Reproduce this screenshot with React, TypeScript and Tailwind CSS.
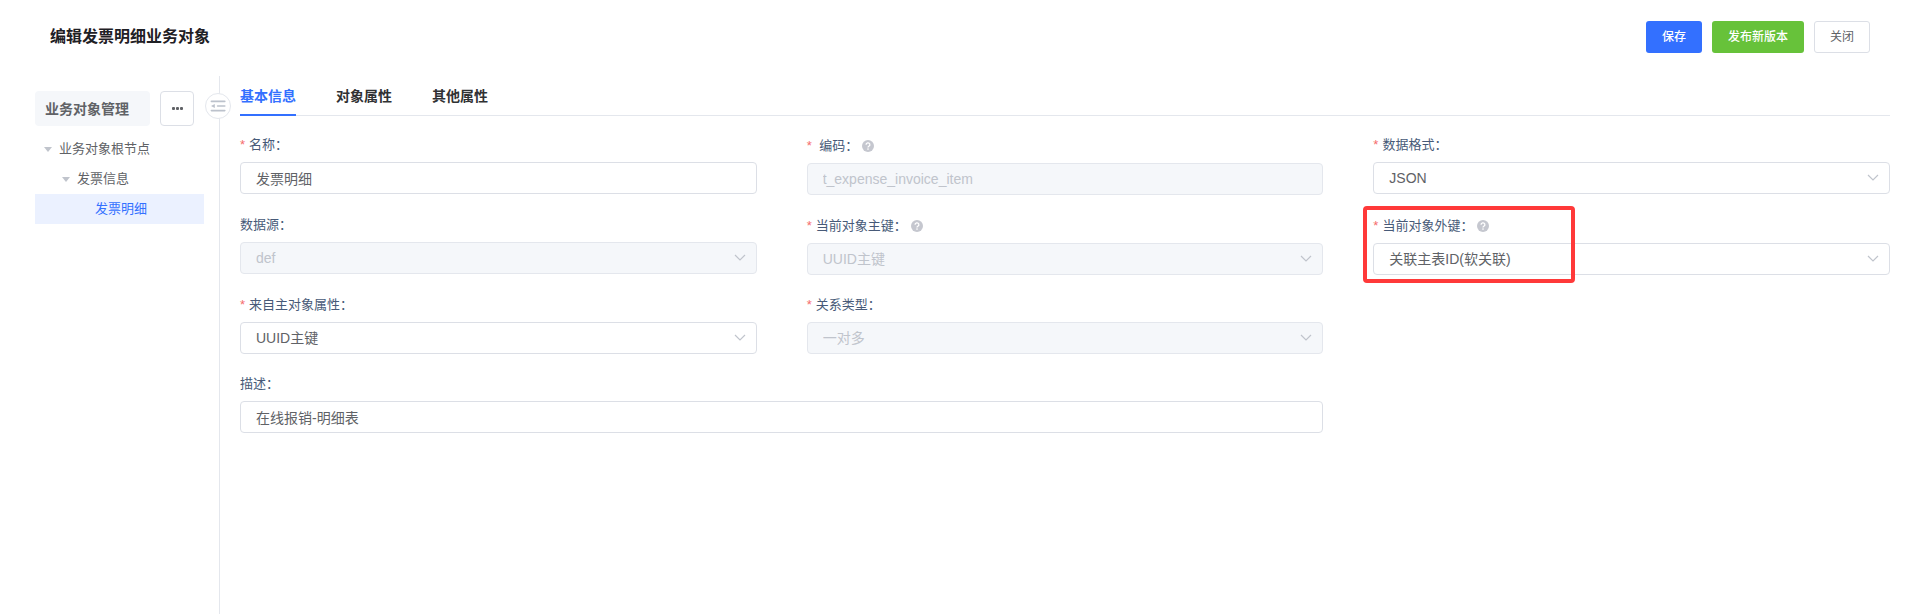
import React, { useState } from 'react';

const fieldClass =
    'h-8 w-full appearance-none rounded border border-[#dcdfe6] bg-white px-[15px] text-sm text-[#606266] outline-none disabled:border-[#e4e7ed] disabled:bg-[#f5f7fa] disabled:text-[#c0c4cc] disabled:opacity-100';

const HelpIcon = () => (
    <svg viewBox="0 0 12 12" className="ml-1 size-3" aria-hidden="true">
        <circle cx="6" cy="6" r="6" fill="#c5c7cf" />
        <path d="M4.1 4.8a1.9 1.8 0 1 1 2.8 1.4c-.6.4-.9.6-.9 1.2" fill="none" stroke="#fff" strokeWidth="1.3" />
        <circle cx="6" cy="9.1" r=".8" fill="#fff" />
    </svg>
);

const TreeArrow = () => (
    <span className="mr-[7px] border-x-4 border-t-[5px] border-x-transparent border-t-[#c0c4cc]" />
);

type FieldProps = {
    id: string;
    label: string;
    value: string;
    type?: 'input' | 'select';
    required?: boolean;
    disabled?: boolean;
    help?: boolean;
    className?: string;
};

const Field = ({ id, label, value, type = 'input', required, disabled, help, className = '' }: FieldProps) => {
    const [current, setCurrent] = useState(value);

    return (
        <div className={className}>
            <div className={`flex text-[13px] leading-5 text-[#475a78] ${help ? 'h-7 items-start pt-px' : 'h-[27px]'}`}>
                {required && <span className="mr-1 text-[#f56c6c]">*</span>}
                <label htmlFor={id} className="whitespace-pre">{label}：</label>
                {help && <span className="flex h-5 items-center"><HelpIcon /></span>}
            </div>
            {type === 'input' ? (
                <input
                    id={id}
                    value={current}
                    disabled={disabled}
                    onChange={(e) => setCurrent(e.target.value)}
                    className={`block ${fieldClass}`}
                />
            ) : (
                <div className="relative">
                    <select
                        id={id}
                        value={current}
                        disabled={disabled}
                        onChange={(e) => setCurrent(e.target.value)}
                        className={`block ${fieldClass}`}
                    >
                        <option value={value}>{value}</option>
                    </select>
                    <svg viewBox="0 0 12 8" className="pointer-events-none absolute top-3 right-[11px] h-2 w-3" fill="none" stroke="#c0c4cc">
                        <path d="M1 1l5 5L11 1" strokeWidth="1.2" />
                    </svg>
                </div>
            )}
        </div>
    );
};

const tabs = ['基本信息', '对象属性', '其他属性'];

const App = () => {
    const [activeTab, setActiveTab] = useState(tabs[0]);

    return (
        <div className="flex min-h-screen flex-col bg-white font-['Liberation_Sans','Noto_Sans_CJK_SC',sans-serif]">
            <header className="flex h-[76px] items-start justify-between pr-[49px] pl-[50px]">
                <h1 className="pt-[25px] text-base leading-6 font-bold text-[#1f2025]">编辑发票明细业务对象</h1>
                <div className="flex gap-2.5 pt-[21px] text-xs font-medium">
                    <button className="h-8 rounded-[3px] bg-[#3370ff] px-4 text-white">保存</button>
                    <button className="h-8 rounded-[3px] bg-[#67c23a] px-4 text-white">发布新版本</button>
                    <button className="h-8 rounded-[3px] border border-[#dcdfe6] px-[15px] font-normal text-[#606266]">关闭</button>
                </div>
            </header>

            <div className="flex flex-1">
                <aside className="relative w-[220px] shrink-0 border-r border-[#e4e7ed] pt-[15px] pr-[15px] pl-[35px]">
                    <div className="mb-2 flex gap-2.5 pr-2.5 text-[#606266]">
                        <h2 className="h-[35px] flex-1 rounded bg-[#f5f7fa] pl-2.5 text-sm leading-[36px] font-bold">业务对象管理</h2>
                        <button aria-label="更多" className="flex h-[35px] w-[34px] items-center justify-center gap-px rounded border border-[#dcdfe6]">
                            <span className="size-[3px] rounded-[1px] bg-[#606266]" />
                            <span className="size-[3px] rounded-[1px] bg-[#606266]" />
                            <span className="size-[3px] rounded-[1px] bg-[#606266]" />
                        </button>
                    </div>
                    <ul className="text-[13px] leading-[30px] text-[#606266]">
                        <li className="flex items-center pl-[9px]">
                            <TreeArrow />
                            业务对象根节点
                        </li>
                        <li className="flex items-center pl-[27px]">
                            <TreeArrow />
                            发票信息
                        </li>
                        <li className="bg-[#ebf1ff] pl-[60px] text-[#3370ff]">发票明细</li>
                    </ul>
                    <button aria-label="收起" className="absolute top-[17px] -right-3 flex size-[26px] items-center justify-center rounded-full border border-[#e4e7ed] bg-white">
                        <svg viewBox="0 0 16 12" className="h-3 w-4 shrink-0" fill="none" stroke="#bcc2cc" strokeLinecap="round">
                            <path d="M1.4 1.4h13.4M7.6 6h7.2M1.4 10.6h13.4" strokeWidth="1.6" />
                            <path d="M4.8 3.9v4.2L1 6z" fill="#bcc2cc" stroke="none" />
                        </svg>
                    </button>
                </aside>

                <main className="min-w-0 flex-1 pr-[29px] pl-5">
                    <div role="tablist" className="flex h-10 gap-10 border-b border-[#e4e7ed] text-sm font-bold">
                        {tabs.map((tab) => (
                            <button
                                key={tab}
                                role="tab"
                                aria-selected={tab === activeTab}
                                onClick={() => setActiveTab(tab)}
                                className={`h-10 border-b-2 pt-0.5 ${tab === activeTab ? 'border-[#3370ff] text-[#3370ff]' : 'border-transparent text-[#303133]'}`}
                            >
                                {tab}
                            </button>
                        ))}
                    </div>

                    <form className="grid grid-cols-3 gap-x-[50px] gap-y-5 pt-[19px]">
                        <Field id="name" label="名称" value="发票明细" required />
                        <Field id="code" label=" 编码" value="t_expense_invoice_item" required disabled help />
                        <Field id="format" label="数据格式" value="JSON" type="select" required />
                        <Field id="source" label="数据源" value="def" type="select" disabled />
                        <Field id="primaryKey" label="当前对象主键" value="UUID主键" type="select" required disabled help />
                        <div className="relative">
                            <Field id="foreignKey" label="当前对象外键" value="关联主表ID(软关联)" type="select" required help />
                            <div className="pointer-events-none absolute -top-[9px] -left-2.5 h-[77px] w-[212px] rounded border-4 border-[#ff3939]" />
                        </div>
                        <Field id="parentProp" label="来自主对象属性" value="UUID主键" type="select" required />
                        <Field id="relation" label="关系类型" value="一对多" type="select" required disabled />
                        <Field id="desc" label="描述" value="在线报销-明细表" className="col-span-2 col-start-1" />
                    </form>
                </main>
            </div>
        </div>
    );
};

export default App;
